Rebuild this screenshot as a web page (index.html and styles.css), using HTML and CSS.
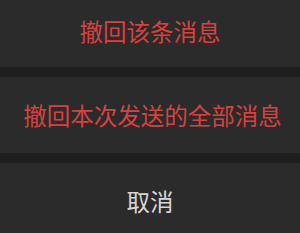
FILE: index.html
```html
<html>
<head>
    <title>撤回消息</title>
    <link rel="stylesheet" href="styles.css">
</head>
<body>
    <div class="sheet">
        <div class="item item-first danger">撤回该条消息</div>
        <div class="gap"></div>
        <div class="item item-mid danger">撤回本次发送的全部消息</div>
        <div class="gap"></div>
        <div class="item item-last cancel">取消</div>
    </div>
</body>
</html>
```

FILE: styles.css
```css
body {
    margin: 0;
    background-color: #1e1e1e;
    font-family: "Noto Sans CJK SC", "Noto Sans", sans-serif;
}
.sheet {
    display: flex;
    flex-direction: column;
    width: 300px;
    height: 233px;
}
.item {
    background-color: #2b2b2b;
    display: flex;
    align-items: center;
    justify-content: center;
    font-size: 23.5px;
    cursor: pointer;
}
.item-first {
    height: 67px;
    padding-bottom: 5px;
    box-sizing: border-box;
}
.item-mid {
    height: 76px;
    padding-left: 5px;
    box-sizing: border-box;
}
.item-last {
    height: 70px;
    padding-top: 6px;
    box-sizing: border-box;
}
.gap {
    height: 10px;
    background-color: #1e1e1e;
}
.danger {
    color: #d9413f;
}
.cancel {
    color: #d6d6d6;
}
```
